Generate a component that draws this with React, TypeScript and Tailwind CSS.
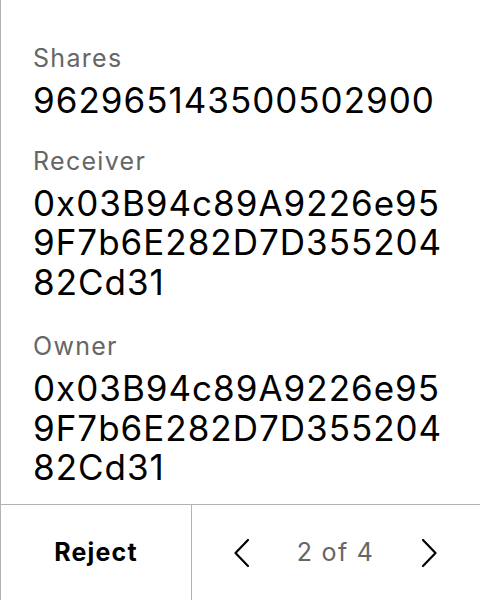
import { ReactNode } from "react";

const sections = [
  { label: "Shares", value: "962965143500502900", className: "mb-[25px]" },
  { label: "Receiver", value: "0x03B94c89A9226e959F7b6E282D7D35520482Cd31", className: "mb-[29px]" },
  { label: "Owner", value: "0x03B94c89A9226e959F7b6E282D7D35520482Cd31", className: "" },
];

function Chevron({ dir }: { dir: "left" | "right" }) {
  return (
    <svg width="20" height="30" viewBox="0 0 20 30" fill="none" stroke="#000" strokeWidth="2.2" strokeLinecap="round" strokeLinejoin="round">
      {dir === "left" ? <path d="M16 2 L3.5 15 L16 28" /> : <path d="M4 2 L16.5 15 L4 28" />}
    </svg>
  );
}

function Field({ label, children, className }: { label: string; children: ReactNode; className: string }) {
  return (
    <div className={className}>
      <div className="text-[25px] leading-[30px] tracking-[1.3px] text-[#666]">{label}</div>
      <div className="mt-2 text-[35px] leading-[39.5px] tracking-[1px] text-black break-all">{children}</div>
    </div>
  );
}

export default function App() {
  return (
    <div className="h-[600px] w-[480px] flex flex-col bg-white border-l border-[#b3b3b3] font-['Inter',sans-serif]">
      {/* Details */}
      <div className="flex-1 pt-[43px] pl-8 pr-8">
        {sections.map((s) => (
          <Field key={s.label} label={s.label} className={s.className}>
            {s.value}
          </Field>
        ))}
      </div>

      {/* Footer */}
      <div className="h-[96px] grid grid-cols-[191px_1fr] border-t border-[#b3b3b3]">
        <button className="flex items-center justify-center border-r border-[#b3b3b3] text-[25px] font-bold tracking-[1.2px] text-black">
          Reject
        </button>
        <div className="flex items-center justify-between pl-10 pr-[41px]">
          <Chevron dir="left" />
          <span className="text-[25px] tracking-[1.3px] text-[#666]">2 of 4</span>
          <Chevron dir="right" />
        </div>
      </div>
    </div>
  );
}
